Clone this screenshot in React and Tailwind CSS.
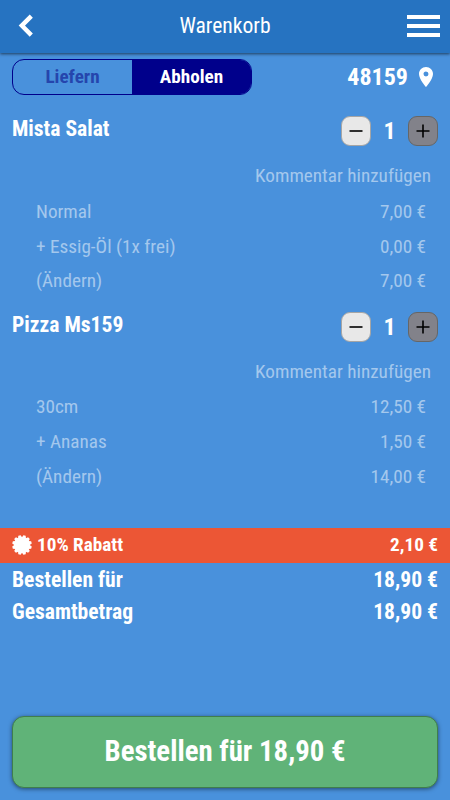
import { MdLocationOn } from "react-icons/md";

const items = [
  {
    name: "Mista Salat",
    count: 1,
    rows: [
      ["Normal", "7,00 €"],
      ["+ Essig-Öl (1x frei)", "0,00 €"],
      ["(Ändern)", "7,00 €"],
    ],
  },
  {
    name: "Pizza Ms159",
    count: 1,
    rows: [
      ["30cm", "12,50 €"],
      ["+ Ananas", "1,50 €"],
      ["(Ändern)", "14,00 €"],
    ],
  },
];

const Header = () => {
  return (
    <header className="z-10 flex h-[53px] shrink-0 items-center justify-between bg-[#2673c1] pr-2.5 pb-px pl-[18px] shadow-[0_1px_3px_rgba(0,0,0,0.6)]">
      <svg className="h-6 w-[25px]" viewBox="0 0 25 24" fill="none">
        <path d="M13.300 2.100 3.800 11.600l9.500 9.500" stroke="white" strokeWidth="4.400" />
      </svg>
      <h1 className="pt-px text-[21.6px]">Warenkorb</h1>
      <div className="flex w-[33px] flex-col gap-[5px]">
        <span className="h-1 bg-white" />
        <span className="h-1 bg-white" />
        <span className="h-1 bg-white" />
      </div>
    </header>
  );
};

const DeliveryBar = () => {
  return (
    <div className="mt-1.5 flex h-9 items-center justify-between px-3">
      <div className="flex h-9 w-60 overflow-hidden rounded-xl border border-[#00008b] text-[19.2px] font-bold">
        <button className="flex-1 text-[#2545ad]">Liefern</button>
        <button className="flex-1 bg-[#00008b]">Abholen</button>
      </div>
      <div className="flex items-center gap-1.5 text-2xl font-bold">
        48159
        <MdLocationOn className="mb-px size-6" />
      </div>
    </div>
  );
};

const StepButton = ({ plus }) => {
  return (
    <button
      className={
        plus
          ? "flex size-[30px] items-center justify-center rounded-[9px] border border-[#666] bg-[#82828a]"
          : "flex size-[30px] items-center justify-center rounded-[9px] border border-[#a5a5a5] bg-[#e8e8e8]"
      }
    >
      <svg className="size-[14px]" viewBox="0 0 14 14" stroke="black" strokeWidth="1.600">
        <path d={plus ? "M.5 7h13M7 .5v13" : "M.5 7h13"} />
      </svg>
    </button>
  );
};

const CartItem = ({ item }) => {
  return (
    <section className="h-[195.500px]">
      <div className="flex h-11 justify-between px-3">
        <h2 className="text-[21.6px] leading-[28px] font-bold">{item.name}</h2>
        <div className="mt-px flex h-[30px] items-center text-2xl font-bold">
          <StepButton />
          <span className="w-[37px] text-center">{item.count}</span>
          <StepButton plus />
        </div>
      </div>
      <div className="text-[19.2px] leading-[34.8px] text-white/50">
        <p className="pr-[19px] text-right">Kommentar hinzufügen</p>
        <div className="mt-px pr-6 pl-9">
          {item.rows.map(([label, price]) => (
            <div key={label} className="flex justify-between">
              <span>{label}</span>
              <span>{price}</span>
            </div>
          ))}
        </div>
      </div>
    </section>
  );
};

const teeth = [15, 45, 75, 105, 135, 165, 195, 225, 255, 285, 315, 345];

const DiscountIcon = () => {
  return (
    <svg className="mr-[5px] mb-px size-5" viewBox="0 0 20 20" fill="white">
      <circle cx="10" cy="10" r="8" />
      {teeth.map((angle) => (
        <path key={angle} d="M7.800 3 8.800 .2h2.400l1 2.800z" transform={`rotate(${angle} 10 10)`} />
      ))}
    </svg>
  );
};

const Totals = () => {
  return (
    <div className="font-bold">
      <div className="flex h-[35px] items-center bg-[#ec5635] px-3 text-[19.2px]">
        <DiscountIcon />
        <span>10% Rabatt</span>
        <span className="ml-auto">2,10 €</span>
      </div>
      <div className="mt-px flex justify-between px-3 text-[21.6px] leading-8">
        <span>Bestellen für</span>
        <span>18,90 €</span>
      </div>
      <div className="flex justify-between px-3 text-[21.6px] leading-8">
        <span>Gesamtbetrag</span>
        <span>18,90 €</span>
      </div>
    </div>
  );
};

export default function App() {
  return (
    <main className="flex h-[800px] w-[450px] flex-col overflow-hidden bg-[#4991dc] font-['Roboto_Condensed',Roboto,sans-serif] text-white font-stretch-condensed">
      <Header />
      <DeliveryBar />
      <div className="mt-5 h-[413px]">
        {items.map((item) => (
          <CartItem key={item.name} item={item} />
        ))}
      </div>
      <Totals />
      <button className="mx-3 mt-auto mb-3 h-[72px] shrink-0 rounded-xl border border-[#407e4c] bg-[#60b378] text-[28.8px] font-bold shadow-[0_1px_4px_rgba(0,0,0,0.5)]">
        Bestellen für 18,90 €
      </button>
    </main>
  );
}
